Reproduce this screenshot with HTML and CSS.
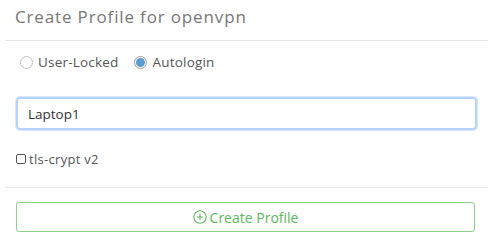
FILE: index.html
```html
<!DOCTYPE html>
<html>
<head>
<meta charset="utf-8">
<link rel="stylesheet" href="styles.css">
</head>
<body>
<div class="panel">
  <div class="panel-header">
    <h3 class="title">Create Profile for openvpn</h3>
  </div>
  <div class="panel-body">
    <div class="radios">
      <label class="radio"><span class="radio-dot"></span>User-Locked</label>
      <label class="radio"><span class="radio-dot checked"></span>Autologin</label>
    </div>
    <div class="field">Laptop1</div>
    <label class="check"><span class="check-box"></span>tls-crypt v2</label>
  </div>
  <div class="panel-footer">
    <div class="btn">
      <svg class="btn-icon" viewBox="0 0 14 14" width="14" height="14">
        <circle cx="7" cy="7" r="6.2" fill="none" stroke="currentColor" stroke-width="1.1"/>
        <path d="M7 3.8V10.2M3.8 7H10.2" stroke="currentColor" stroke-width="1.1" fill="none"/>
      </svg>
      <span>Create Profile</span>
    </div>
  </div>
</div>
</body>
</html>
```
FILE: styles.css
```css
html, body {
  margin: 0;
  padding: 0;
  background: #ffffff;
}
body {
  font-family: "Open Sans", "DejaVu Sans", sans-serif;
  color: #555555;
}
.panel {
  width: 483px;
  margin-left: 5px;
}
.panel-header {
  height: 41px;
  border-bottom: 1px solid #e6e6e6;
  box-sizing: border-box;
  padding-left: 10px;
  display: flex;
  align-items: center;
}
.title {
  margin: 0;
  font-size: 17px;
  font-weight: 400;
  letter-spacing: 0.85px;
  color: #7a7677;
  position: relative;
  top: -4px;
}
.panel-body {
  border-bottom: 1px solid #e6e6e6;
  padding: 13px 11px 0 10px;
  height: 147px;
  box-sizing: border-box;
}
.radios {
  display: flex;
  gap: 16px;
  padding-left: 5px;
  height: 16px;
  align-items: center;
}
.radio {
  display: flex;
  align-items: center;
  font-size: 13.5px;
  letter-spacing: 0.2px;
  color: #555555;
}
.radio-dot {
  width: 11px;
  height: 11px;
  border: 1px solid #c4c4c4;
  border-radius: 50%;
  margin-right: 5px;
  box-sizing: content-box;
  position: relative;
}
.radio-dot.checked {
  border-color: #9a9a9a;
}
.radio-dot.checked::after {
  content: "";
  position: absolute;
  left: 1px;
  top: 1px;
  width: 9px;
  height: 9px;
  border-radius: 50%;
  background: #5b9bd1;
}
.field {
  margin-top: 27px;
  height: 29px;
  border: 2px solid #b6d3fb;
  border-radius: 4px;
  box-shadow: 0 0 1px 1px #d5e5fd;
  display: flex;
  align-items: center;
  padding-left: 10px;
  font-size: 13.5px;
  color: #333333;
  box-sizing: content-box;
  margin-left: 1px;
}
.check {
  margin-top: 20px;
  display: flex;
  align-items: center;
  font-size: 13px;
  letter-spacing: 0.3px;
  color: #555555;
  padding-left: 1px;
}
.check-box {
  width: 8px;
  height: 8px;
  border: 1px solid #555555;
  border-radius: 2px;
  margin-right: 3px;
}
.panel-footer {
  padding: 14px 13px 0 10px;
}
.btn {
  height: 28px;
  border: 1px solid #8fd18c;
  border-radius: 3px;
  color: #5cb85c;
  display: flex;
  align-items: center;
  justify-content: center;
  gap: 3px;
  font-size: 14px;
  margin-left: 1px;
}
.btn-icon {
  display: block;
}
```
